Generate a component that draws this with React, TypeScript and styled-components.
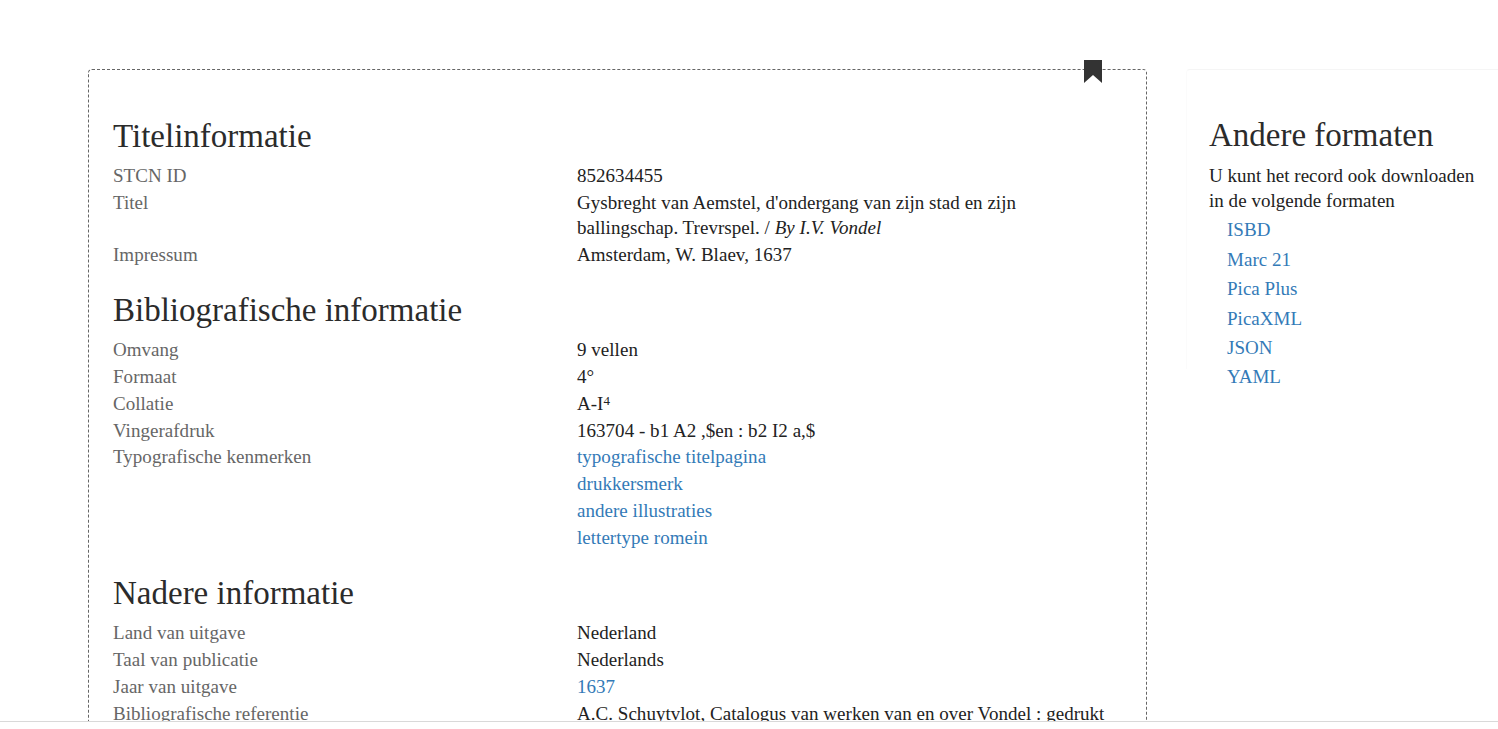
import React from 'react';
import styled, { createGlobalStyle } from 'styled-components';

const GlobalStyle = createGlobalStyle`
  html, body {
    margin: 0;
    height: 100%;
    overflow: hidden;
    background: #fff;
  }
  body {
    font-family: "Liberation Serif", "Times New Roman", serif;
    font-size: 19px;
    letter-spacing: 0.03px;
    color: #222;
  }
`;

const Viewport = styled.div`
  height: 721px;
  box-sizing: content-box;
  overflow: hidden;
  border-bottom: 1px solid #d9d9d9;
`;

const Page = styled.div`
  display: flex;
  align-items: flex-start;
  padding: 69px 0 0 88px;
`;

const Card = styled.main`
  position: relative;
  box-sizing: border-box;
  width: 1059px;
  flex-shrink: 0;
  padding: 47.7px 24px 24px;
  border: 1px dashed #666;
  border-radius: 4px;
`;

const Bookmark = styled.svg`
  position: absolute;
  top: -10px;
  right: 44px;
  width: 18px;
  height: 23px;
  fill: #333;
`;

const Heading = styled.h2`
  margin: 0 0 9.5px;
  font-size: 33px;
  font-weight: 400;
  letter-spacing: 0;
  line-height: 36px;
  color: #2b2b2b;
`;

const Section = styled.section`
  margin-bottom: 24.6px;
`;

const Row = styled.div`
  display: grid;
  grid-template-columns: 464px 1fr;
  margin-bottom: 1.6px;
  line-height: 25.2px;
`;

const Label = styled.div`
  color: #666;
`;

const Value = styled.div`
  max-width: 530px;
`;

const Link = styled.a`
  display: block;
  color: #337ab7;
  text-decoration: none;
  cursor: pointer;
`;

const LinkLine = styled.div`
  height: 26.8px;

  &:last-child {
    height: 25.2px;
  }
`;

const Sup = styled.sup`
  font-size: 13px;
  line-height: 0;
  vertical-align: 5px;
`;

const Sidebar = styled.aside`
  box-sizing: border-box;
  width: 312px;
  height: 300px;
  margin-left: 39px;
  padding: 47px 20px 0 22px;
  border-top: 1px solid #f5f5f5;
  border-left: 1px solid #fbfbfb;
  border-radius: 4px 0 0 0;
`;

const SideText = styled.p`
  margin: 0 0 2.5px;
  line-height: 25.2px;
`;

const FormatList = styled.ul`
  margin: 0;
  padding: 0 0 0 18px;
  list-style: none;
`;

const FormatItem = styled.li`
  height: 29.4px;
  line-height: 29.4px;
`;

type RowData = {
  label: string;
  value?: React.ReactNode;
  links?: string[];
};

const sections: { title: string; rows: RowData[] }[] = [
  {
    title: 'Titelinformatie',
    rows: [
      { label: 'STCN ID', value: '852634455' },
      {
        label: 'Titel',
        value: (
          <>
            Gysbreght van Aemstel, d'ondergang van zijn stad en zijn ballingschap. Trevrspel. / <i>By I.V. Vondel</i>
          </>
        ),
      },
      { label: 'Impressum', value: 'Amsterdam, W. Blaev, 1637' },
    ],
  },
  {
    title: 'Bibliografische informatie',
    rows: [
      { label: 'Omvang', value: '9 vellen' },
      { label: 'Formaat', value: '4°' },
      {
        label: 'Collatie',
        value: (
          <>
            A-I<Sup>4</Sup>
          </>
        ),
      },
      { label: 'Vingerafdruk', value: '163704 - b1 A2 ,$en : b2 I2 a,$' },
      {
        label: 'Typografische kenmerken',
        links: ['typografische titelpagina', 'drukkersmerk', 'andere illustraties', 'lettertype romein'],
      },
    ],
  },
  {
    title: 'Nadere informatie',
    rows: [
      { label: 'Land van uitgave', value: 'Nederland' },
      { label: 'Taal van publicatie', value: 'Nederlands' },
      { label: 'Jaar van uitgave', links: ['1637'] },
      { label: 'Bibliografische referentie', value: 'A.C. Schuytvlot, Catalogus van werken van en over Vondel : gedrukt' },
    ],
  },
];

const formats = ['ISBD', 'Marc 21', 'Pica Plus', 'PicaXML', 'JSON', 'YAML'];

export default function App() {
  return (
    <>
      <GlobalStyle />
      <Viewport>
        <Page>
          <Card>
            <Bookmark viewBox="0 0 18 23">
              <path d="M0 0H18V23L9 15L0 23Z" />
            </Bookmark>
            {sections.map((section) => (
              <Section key={section.title}>
                <Heading>{section.title}</Heading>
                {section.rows.map((row) => (
                  <Row key={row.label}>
                    <Label>{row.label}</Label>
                    <Value>
                      {row.value}
                      {row.links &&
                        row.links.map((link) => (
                          <LinkLine key={link}>
                            <Link>{link}</Link>
                          </LinkLine>
                        ))}
                    </Value>
                  </Row>
                ))}
              </Section>
            ))}
          </Card>
          <Sidebar>
            <Heading>Andere formaten</Heading>
            <SideText>U kunt het record ook downloaden in de volgende formaten</SideText>
            <FormatList>
              {formats.map((format) => (
                <FormatItem key={format}>
                  <Link>{format}</Link>
                </FormatItem>
              ))}
            </FormatList>
          </Sidebar>
        </Page>
      </Viewport>
    </>
  );
}
